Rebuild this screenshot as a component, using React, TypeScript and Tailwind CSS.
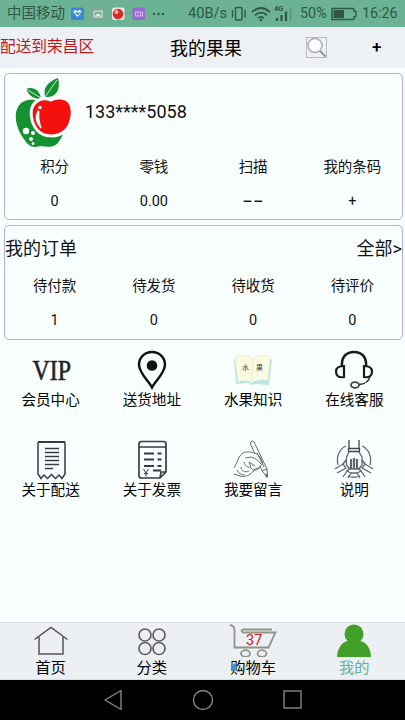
import React from 'react';

interface Stat {
  label: string;
  value: string;
}

interface MenuItem {
  label: string;
  icon: React.ReactNode;
}

const accountStats: Stat[] = [
  { label: '积分', value: '0' },
  { label: '零钱', value: '0.00' },
  { label: '扫描', value: '−−' },
  { label: '我的条码', value: '+' },
];

const orderStats: Stat[] = [
  { label: '待付款', value: '1' },
  { label: '待发货', value: '0' },
  { label: '待收货', value: '0' },
  { label: '待评价', value: '0' },
];

const AppleLogo = () => (
  <svg className="w-[58px] h-[72px]" viewBox="0 0 58 72">
    <path d="M20 23C13 22 6 24 3 30C-2 39 2 53 9 62C14 70 18 71 25 69C31 70 39 71 43 66L48 58L30 54L18 40Z" fill="#16912f" />
    <path d="M11 12C18 9 25 13 26 22C19 22 14 19 11 12Z" fill="#16912f" />
    <path d="M43 1C32 5 28 11 30 20C41 21 46 13 43 1Z" fill="#16912f" />
    <path d="M11 12L26 21M42 3L30 20" stroke="#f9ffff" strokeWidth=".8" fill="none" />
    <path d="M36 23C41 20 51 20 55 26C60 34 56 49 50 54C42 61 29 60 23 54C16 47 14 33 19 27C24 21 31 21 36 23Z" fill="#f51010" stroke="#f9ffff" strokeWidth="3" />
    <path d="M23 34C20 40 21 46 26 51C24 45 23 40 24 35Z" fill="#f9ffff" stroke="#f9ffff" strokeWidth="1.200" />
    <circle cx="25" cy="30.500" r="1.700" fill="#f9ffff" />
    <circle cx="11" cy="54" r="3.200" fill="#f9ffff" />
    <circle cx="18" cy="56" r="2" fill="#f9ffff" />
    <circle cx="16" cy="62" r="2" fill="#f9ffff" />
    <circle cx="18" cy="66.500" r="1.500" fill="#f9ffff" />
  </svg>
);

const VipIcon = () => (
  <svg className="h-10 w-16" viewBox="0 0 64 40">
    <text
      x="13.500"
      y="30"
      textLength="38.500"
      lengthAdjust="spacingAndGlyphs"
      fontSize="29"
      fontFamily="Liberation Serif, serif"
      fill="#222"
      stroke="#222"
      strokeWidth=".6"
    >
      VIP
    </text>
  </svg>
);

const PinIcon = () => (
  <svg className="w-10 h-10" viewBox="0 0 40 40" fill="none" stroke="#111" strokeWidth="2.400">
    <path d="M20 37.500C16 30 7 23 7 14.500A13 12.500 0 0 1 33 14.500C33 23 24 30 20 37.500Z" />
    <circle cx="20" cy="15.500" r="5.300" fill="#111" stroke="none" />
  </svg>
);

const BookIcon = () => (
  <svg className="w-10 h-10" viewBox="0 0 40 40">
    <path d="M1 10L3 34L15 33L19 35L23 34L36 35L39 10L35 8L5 8Z" fill="#b6e6ea" />
    <path d="M2 7C8 4 15 5 20 9C25 5 31 5 37 7L35 31C29 29 23 30 19 33C15 30 9 30 5 32Z" fill="#fbfbe0" stroke="#e3e9d2" strokeWidth=".6" />
    <path d="M20 9L19 32" stroke="#e6e8cf" strokeWidth=".8" />
    <text x="9" y="20" fontSize="7" fill="#444">水</text>
    <text x="23" y="20" fontSize="7" fill="#444">果</text>
  </svg>
);

const HeadsetIcon = () => (
  <svg className="w-10 h-10" viewBox="0 0 40 40" fill="none" stroke="#1c1c1c" strokeWidth="2.200">
    <path d="M8 17C7 6 13 2 20 2S33 6 32 17" strokeWidth="2.600" />
    <path d="M10 16V27C5 28 2 26 2 21.500S5 16 10 16ZM30 16V27C35 28 38 26 38 21.500S35 16 30 16Z" />
    <path d="M36 26C35 32 31 34 25 34.500" strokeWidth="1.400" />
    <ellipse cx="21" cy="35" rx="4" ry="2.800" stroke="#444" strokeWidth="1.800" />
  </svg>
);

const ReceiptIcon = () => (
  <svg className="w-10 h-10" viewBox="0 0 40 40" fill="none" stroke="#3b3b3f" strokeWidth="1.500">
    <path d="M10 38.500L7 34V3Q7 2 8 2H33Q34 2 34 3V34L31 38.500L28 35L24.500 38.500L20.500 34.500L16.500 38.500L13 35Z" />
    <path d="M7 2H34" strokeWidth="2" />
    <path d="M14 8.500H28M14 12.500H28M14 16.500H28M14 20.500H28M14 24.500H28M14 28.500H22" strokeWidth="1.300" />
  </svg>
);

const InvoiceIcon = () => (
  <svg className="w-10 h-10" viewBox="0 0 40 40" fill="none" stroke="#3b3b3f" strokeWidth="1.700">
    <path d="M34 32V4Q34 1.500 31.500 1.500H9.500Q7 1.500 7 4V36Q7 38 9.500 38H28ZM28 38L29 32H34M7 7H34" />
    <path d="M12 13.500H22M25.500 13.500H29.500M12 19.500H22M25.500 19.500H29.500M12 26H22M25.500 26H29.500M21 30.500H29" strokeWidth="1.800" />
    <path d="M11.500 29L14 33L16.500 29M14 33V36.500M12 33.500H16" strokeWidth="1" />
  </svg>
);

const WritingIcon = () => (
  <svg className="w-10 h-10" viewBox="0 0 40 40" fill="none" stroke="#666b6c" strokeWidth="1">
    <path d="M1 28C4 24 5 16 10 13C14 11 19 12 24 14C27 16 28 19 30 23L26 28L22 29C19 34 13 38 7 36L1 34" />
    <path d="M12 18L18 17C22 18 25 20 28 24M11 22C12 26 15 28 18 27L16 22L22 26M8 27C8 31 12 33 16 31M18 28C20 31 23 31 26 28M4 30C5 33 8 35 12 35" />
    <path d="M22 14L17.500 4Q17.500 1 19.500 1T22 4L34 29L34.500 37L29 31L27 26" />
    <path d="M29 31L34 29M24 13L31 27" />
    <path d="M32.500 34L34.500 37.500" strokeWidth="2" />
  </svg>
);

const HandsIcon = () => (
  <svg className="w-10 h-10" viewBox="0 0 40 40" fill="none" stroke="#63676a" strokeWidth="1.300">
    <path d="M12 6C5 9 2 17 4 25M28 6C35 9 38 17 36 25M14 36Q20 38.500 26 36" />
    <path d="M15 0V9M25 0V9" stroke="#444" />
    <path d="M14.500 8.500H25.500V11.500H14.500Z" stroke="#444" />
    <path d="M15 12L12.500 17V25L16 29H25L28 25V17L25 12" />
    <path d="M17 19V29M20 18V29M23 19V29" strokeWidth="2.200" />
    <path d="M1 29L9 24L12 28L3 33M9 37L13 31L17 33L14 38M39 29L31 24L28 28L37 33M31 37L27 31L23 33L26 38" />
    <path d="M9 24L12 20M31 24L28 20M13 31L16 28M27 31L24 28M17 33H23" strokeWidth="1.600" />
  </svg>
);

const menuItems: MenuItem[] = [
  { label: '会员中心', icon: <VipIcon /> },
  { label: '送货地址', icon: <PinIcon /> },
  { label: '水果知识', icon: <BookIcon /> },
  { label: '在线客服', icon: <HeadsetIcon /> },
  { label: '关于配送', icon: <ReceiptIcon /> },
  { label: '关于发票', icon: <InvoiceIcon /> },
  { label: '我要留言', icon: <WritingIcon /> },
  { label: '说明', icon: <HandsIcon /> },
];

const StatusBar = () => (
  <div className="flex h-[27px] items-center bg-[#6bb394] pt-px text-[14.5px] text-[#315747]">
    <span className="ml-[7px] w-16 whitespace-nowrap">中国移动</span>
    {/* Notification icons */}
    <svg className="h-[14px] w-[94px] shrink-0" viewBox="0 0 94 14">
      <rect x="0" y="0.500" width="13" height="12.500" rx="2" fill="#3889d2" />
      <path d="M6.500 10L2.500 6C2 3 5 2 6.500 4.500C8 2 11 3 10.500 6Z" fill="#e0f1ff" />
      <path d="M1 7H5L6 5L7 8L8 6H12" stroke="#3889d2" fill="none" />
      <rect x="21" y="1" width="12" height="12" rx="2" fill="#82a598" />
      <rect x="23" y="4" width="8" height="6" fill="none" stroke="#e2eee8" />
      <path d="M24 9L27 6L30 9Z" fill="#e2eee8" />
      <rect x="41" y="0.500" width="12.500" height="12.500" rx="2" fill="#f4e4df" />
      <circle cx="47" cy="7" r="5.300" fill="#cf2f2a" />
      <circle cx="45.500" cy="5" r="2" fill="#f5b4a2" />
      <rect x="61.500" y="0.500" width="12.500" height="12.500" rx="2" fill="#9868cf" />
      <rect x="64.500" y="5" width="7" height="4" fill="none" stroke="#d6bcf0" />
      <path d="M67 5V9M69.500 5V9" stroke="#d6bcf0" strokeWidth=".7" />
      <circle cx="83" cy="7" r="1.200" fill="#315747" />
      <circle cx="87.500" cy="7" r="1.200" fill="#315747" />
      <circle cx="92" cy="7" r="1.200" fill="#315747" />
    </svg>
    <span className="ml-[23px] w-[43px] text-[14.6px]">40B/s</span>
    {/* Vibrate, wifi and signal */}
    <svg className="h-[22px] w-[62px] shrink-0" viewBox="0 0 62 22" fill="none" stroke="#315747" strokeWidth="1.400">
      <rect x="4.500" y="4.500" width="6.500" height="12.500" rx="1" />
      <path d="M1.500 7V14.500M14 7V14.500" />
      <path d="M21 9Q30 1 39 9M24 12.200Q30 7 36 12.200M27 15.200Q30 12.500 33 15.200" strokeWidth="1.800" />
      <circle cx="30" cy="17" r="1.300" fill="#315747" stroke="none" />
      <text x="43" y="8" fontSize="7.500" fontWeight="700" fill="#315747" stroke="none">4G</text>
      <path d="M46 15V18M50.500 12V18M55 8.500V18" strokeWidth="2.300" />
      <path d="M59.500 5V18" stroke="#58907a" />
    </svg>
    <span className="ml-[7px] w-[31px] text-[14.400px]">50%</span>
    <svg className="h-[14px] w-[26px] shrink-0" viewBox="0 0 26 14">
      <path d="M1 1.500H22Q23 1.500 23 3V4Q25 4 25 5V9Q25 10 23 10V11Q23 12.500 22 12.500H1Z" fill="none" stroke="#315747" strokeWidth="1.500" />
      <rect x="2.500" y="3" width="10.500" height="8" fill="#315747" />
    </svg>
    <span className="ml-[5px] text-[14.300px]">16:26</span>
  </div>
);

const StatRow = ({ stats }: { stats: Stat[] }) => (
  <div className="grid grid-cols-4 text-center text-[14.5px]">
    {stats.map((stat) => (
      <div key={stat.label} className="flex flex-col">
        <span className="h-[34px] leading-[34px]">{stat.label}</span>
        <span className={`h-[33px] leading-[33px] ${stat.value === '−−' ? 'text-[19px]' : ''}`}>{stat.value}</span>
      </div>
    ))}
  </div>
);

const TabBar = () => (
  <div className="grid h-[58px] grid-cols-4 border-t border-b border-t-[#dadddf] border-b-[#dadddf] bg-[#edf0f3] text-center text-[15.300px] leading-[22px] text-black">
    <div className="flex flex-col items-center">
      <svg className="h-[34px] w-10" viewBox="0 0 40 34" fill="none" stroke="#555155" strokeWidth="1.500">
        <path d="M3.500 16.500L20 4.500L36.500 16.500M8 14V31H32V14" />
      </svg>
      <span>首页</span>
    </div>
    <div className="flex flex-col items-center">
      <svg className="h-[34px] w-10" viewBox="0 0 40 34" fill="none" stroke="#625d62" strokeWidth="1.700">
        <circle cx="13" cy="12" r="6" />
        <circle cx="27" cy="12" r="6" />
        <circle cx="13" cy="25.500" r="6" />
        <circle cx="27" cy="25.500" r="6" />
      </svg>
      <span>分类</span>
    </div>
    <div className="flex flex-col items-center">
      <svg className="h-[34px] w-[50px]" viewBox="0 0 50 34" fill="none" stroke="#90948b" strokeWidth="1.800">
        <path d="M2 2Q6.500 3 6.500 7V24.500H40.500L47.500 9.500H15Q12 7.500 15 6.500H44" />
        <ellipse cx="17.500" cy="30.500" rx="4.500" ry="3.300" />
        <ellipse cx="34" cy="30.500" rx="4.500" ry="3.300" />
        <text x="18" y="21.500" fontSize="14.500" fill="#c51720" stroke="none">37</text>
      </svg>
      <span>购物车</span>
    </div>
    <div className="flex flex-col items-center text-[#65b395]">
      <svg className="h-[34px] w-10" viewBox="0 0 40 34" fill="#42a02a">
        <circle cx="20" cy="11" r="9.500" />
        <path d="M3 34.500C3 25 8 19 14 18H26C32 19 37 25 37 34.500Z" />
      </svg>
      <span>我的</span>
    </div>
  </div>
);

const App = () => {
  return (
    <div className="flex h-[720px] w-[405px] flex-col overflow-hidden bg-[#f9ffff] font-['Roboto','Noto_Sans_CJK_SC',sans-serif] text-[#111]">
      <StatusBar />

      {/* Header */}
      <header className="flex h-[41px] items-center bg-[#edf0f4]">
        <span className="w-[170px] pb-[2px] text-[15.700px] text-[#bd1720]">配送到荣昌区</span>
        <h1 className="w-[136px] pt-px text-[18px] text-black">我的果果</h1>
        <svg className="h-[21px] w-[21px]" viewBox="0 0 21 21" fill="none">
          <rect x=".5" y=".5" width="20" height="20" stroke="#b8babc" />
          <circle cx="9" cy="8.500" r="7" fill="#fafcfd" stroke="#aaaeb1" strokeWidth="1.500" />
          <path d="M14 14L19.500 19.500" stroke="#979a9c" strokeWidth="2" />
        </svg>
        <span className="ml-[45px] pt-px text-[17px] font-medium text-black">+</span>
      </header>

      <main className="flex flex-1 flex-col">
        {/* Account */}
        <section className="mt-[5px] mr-[2px] ml-[4px] h-[147px] rounded-[5px] border border-[#b0aee0]">
          <div className="flex h-[77px] items-center pl-[10px]">
            <AppleLogo />
            <span className="ml-3 pb-[2px] text-[18px]">133****5058</span>
          </div>
          <StatRow stats={accountStats} />
        </section>

        {/* Orders */}
        <section className="mt-[5px] mr-[2px] ml-[4px] h-[115px] rounded-[5px] border border-[#b0aee0]">
          <div className="flex h-11 items-center justify-between text-[18px]">
            <span>我的订单</span>
            <span>全部&gt;</span>
          </div>
          <StatRow stats={orderStats} />
        </section>

        {/* Menu */}
        <nav className="mt-[10px] grid grid-cols-4">
          {menuItems.map((item) => (
            <div key={item.label} className="flex h-[90px] flex-col items-center">
              {item.icon}
              <span className="text-[14.600px] leading-[21px] text-black">{item.label}</span>
            </div>
          ))}
        </nav>
      </main>

      <TabBar />

      {/* System navigation */}
      <div className="flex h-10 items-center justify-center bg-black">
        <svg className="h-6 w-[202px]" viewBox="0 0 202 24" fill="none" stroke="#858585" strokeWidth="1.400">
          <path d="M19 2.500V21.500L3 12Z" strokeLinejoin="round" />
          <circle cx="101" cy="12" r="9.500" />
          <rect x="182" y="3" width="17" height="17" />
        </svg>
      </div>
    </div>
  );
};

export default App;
